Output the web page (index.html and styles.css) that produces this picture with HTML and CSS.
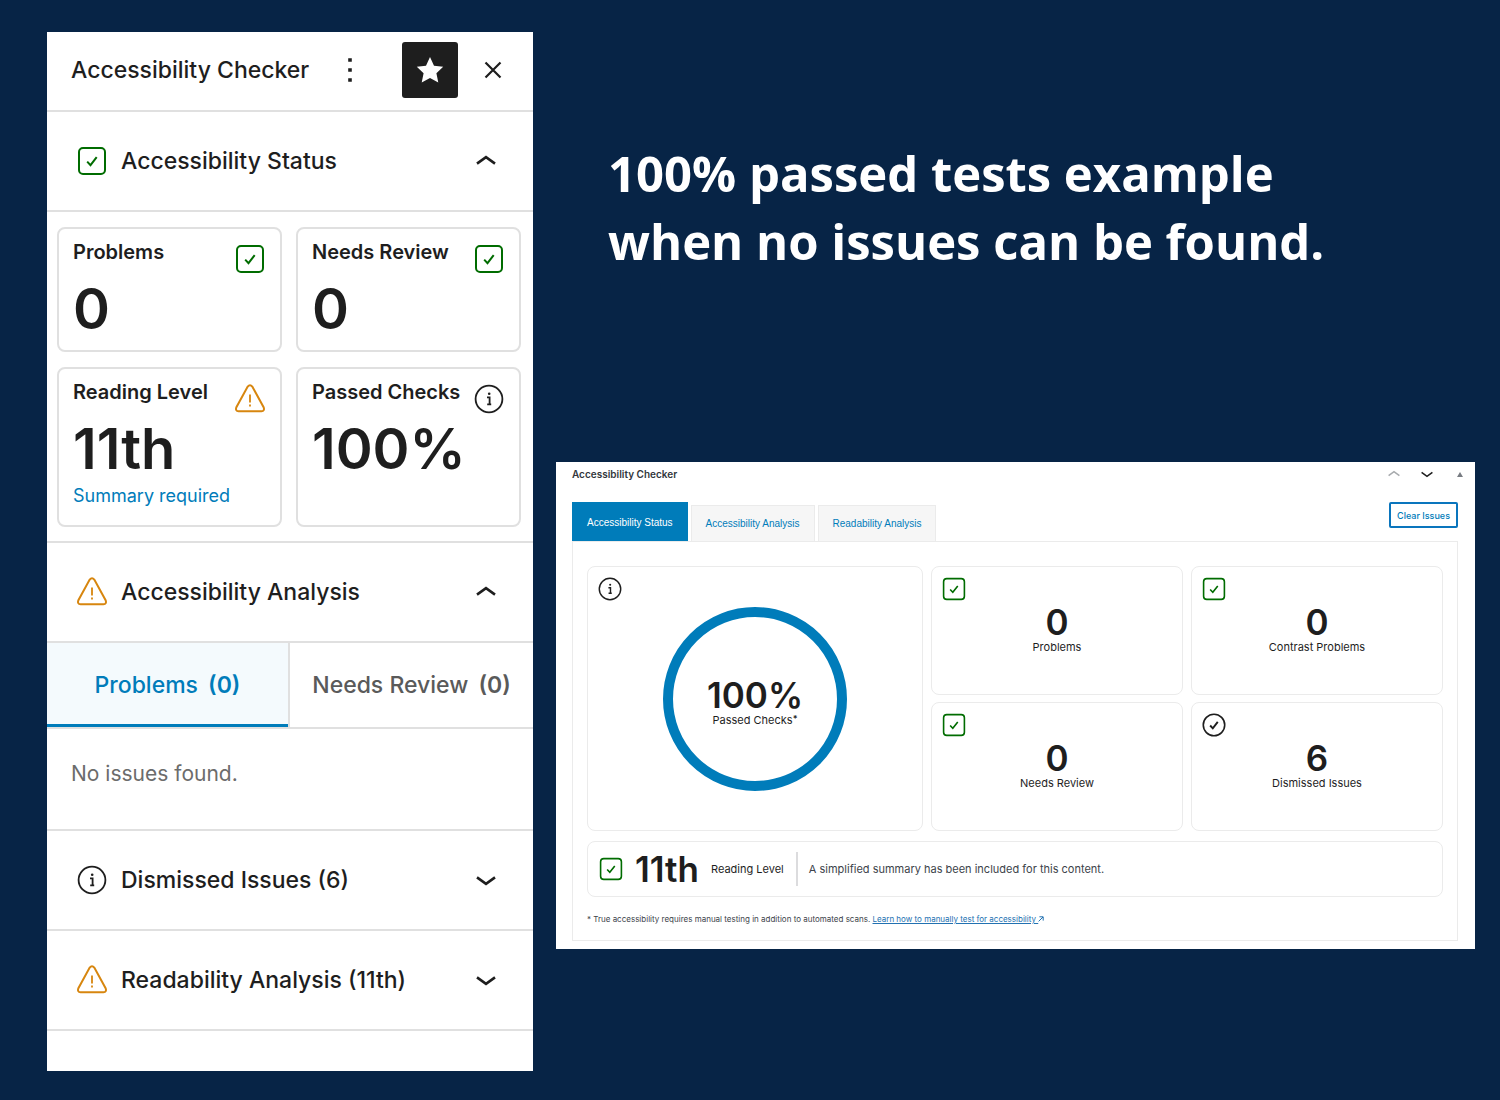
FILE: index.html
```html
<!DOCTYPE html>
<html lang="en">
<head>
<meta charset="utf-8">
<meta name="viewport" content="width=device-width, initial-scale=1">
<title>Accessibility Checker</title>
<link rel="stylesheet" href="styles.css">
</head>
<body>
<svg class="sprite" aria-hidden="true">
  <symbol id="check-square" viewBox="0 0 30 30">
    <rect x="2" y="2" width="26" height="26" rx="4" fill="none" stroke="currentColor" stroke-width="2"/>
    <path d="M10.2 15.6l3.3 3.6 6.2-8" fill="none" stroke="currentColor" stroke-width="2"/>
  </symbol>
  <symbol id="check-circle" viewBox="0 0 30 30">
    <circle cx="15" cy="15" r="13.4" fill="none" stroke="currentColor" stroke-width="2"/>
    <path d="M10.2 15.6l3.3 3.6 6.2-8" fill="none" stroke="currentColor" stroke-width="2.4"/>
  </symbol>
  <symbol id="info" viewBox="0 0 30 30">
    <circle cx="15" cy="15" r="13.4" fill="none" stroke="currentColor" stroke-width="1.8"/>
    <circle cx="15.2" cy="9.7" r="1.3" fill="currentColor"/>
    <path d="M13 13.4h2.6v6.6M13.2 20.3h4" fill="none" stroke="currentColor" stroke-width="1.8"/>
  </symbol>
  <symbol id="warning" viewBox="0 0 30 30">
    <path d="M12.7 2.6Q15-.2 17.3 2.6L28.6 23.2Q30 27 26.4 27.3H3.6Q0 27 1.4 23.2Z" fill="none" stroke="currentColor" stroke-width="2"/>
    <path d="M15 10.6v8M15 20.6v2" fill="none" stroke="currentColor" stroke-width="1.8"/>
  </symbol>
  <symbol id="chevron" viewBox="0 0 20 12">
    <path d="M1 3.4l9 6.4 9-6.4" fill="none" stroke="currentColor" stroke-width="2.6"/>
  </symbol>
</svg>

<main class="page">
  <aside class="sidebar">
    <header class="sidebar-header">
      <h2 class="sidebar-title">Accessibility Checker</h2>
      <div class="sidebar-actions">
        <button class="icon-button" type="button" aria-label="Options">
          <svg class="dots" viewBox="0 0 6 26"><path d="M1.2 1.2h3.6v3.6H1.2zM1.2 11.2h3.6v3.6H1.2zM1.2 21.2h3.6v3.6H1.2z" fill="currentColor"/></svg>
        </button>
        <button class="icon-button pinned" type="button" aria-label="Unpin from toolbar" aria-pressed="true">
          <svg class="star" viewBox="0 0 28 28"><path d="M14 1l4 8.8 9.2 1-6.8 6.4 1.9 9.4L14 21.9l-8.3 4.7 1.9-9.4L.8 10.8l9.2-1z" fill="currentColor"/></svg>
        </button>
        <button class="icon-button close" type="button" aria-label="Close">
          <svg class="cross" viewBox="0 0 18 18"><path d="M1.5 1.5l15 15m0-15l-15 15" fill="none" stroke="currentColor" stroke-width="2.2"/></svg>
        </button>
      </div>
    </header>

    <h3 class="section-heading">
      <button class="section-toggle" type="button" aria-expanded="true">
        <svg class="icon pass"><use href="#check-square"/></svg>
        <span>Accessibility Status</span>
        <svg class="chevron up"><use href="#chevron"/></svg>
      </button>
    </h3>
    <div class="stats">
      <section class="stat">
        <h4 class="stat-label">Problems</h4>
        <svg class="icon pass"><use href="#check-square"/></svg>
        <p class="stat-value">0</p>
      </section>
      <section class="stat">
        <h4 class="stat-label">Needs Review</h4>
        <svg class="icon pass"><use href="#check-square"/></svg>
        <p class="stat-value">0</p>
      </section>
      <section class="stat">
        <h4 class="stat-label">Reading Level</h4>
        <svg class="icon warn"><use href="#warning"/></svg>
        <p class="stat-value">11th</p>
        <a class="stat-link" href="#summary">Summary required</a>
      </section>
      <section class="stat">
        <h4 class="stat-label">Passed Checks</h4>
        <svg class="icon"><use href="#info"/></svg>
        <p class="stat-value">100%</p>
      </section>
    </div>

    <h3 class="section-heading">
      <button class="section-toggle" type="button" aria-expanded="true">
        <svg class="icon warn"><use href="#warning"/></svg>
        <span>Accessibility Analysis</span>
        <svg class="chevron up"><use href="#chevron"/></svg>
      </button>
    </h3>
    <div class="issue-tabs" role="tablist">
      <button class="issue-tab selected" type="button" role="tab" aria-selected="true">Problems <span class="count">(0)</span></button>
      <button class="issue-tab" type="button" role="tab" aria-selected="false">Needs Review <span class="count">(0)</span></button>
    </div>
    <p class="empty">No issues found.</p>

    <h3 class="section-heading">
      <button class="section-toggle" type="button" aria-expanded="false">
        <svg class="icon"><use href="#info"/></svg>
        <span>Dismissed Issues (6)</span>
        <svg class="chevron"><use href="#chevron"/></svg>
      </button>
    </h3>
    <h3 class="section-heading">
      <button class="section-toggle" type="button" aria-expanded="false">
        <svg class="icon warn"><use href="#warning"/></svg>
        <span>Readability Analysis (11th)</span>
        <svg class="chevron"><use href="#chevron"/></svg>
      </button>
    </h3>
  </aside>

  <div class="content">
    <h1 class="headline">100% passed tests example<br>when no issues can be found.</h1>

    <section class="metabox">
      <header class="metabox-header">
        <h2 class="metabox-title">Accessibility Checker</h2>
        <div class="metabox-actions">
          <button class="mini-button muted" type="button" aria-label="Move up"><svg class="mini-chevron up"><use href="#chevron"/></svg></button>
          <button class="mini-button" type="button" aria-label="Move down"><svg class="mini-chevron"><use href="#chevron"/></svg></button>
          <button class="mini-button collapse" type="button" aria-label="Toggle panel"><svg class="triangle" viewBox="0 0 6 5"><path d="M3 0l3 5H0z" fill="currentColor"/></svg></button>
        </div>
      </header>

      <div class="metabox-bar">
        <div class="tabs" role="tablist">
          <button class="tab selected" type="button" role="tab" aria-selected="true">Accessibility Status</button>
          <button class="tab" type="button" role="tab" aria-selected="false">Accessibility Analysis</button>
          <button class="tab" type="button" role="tab" aria-selected="false">Readability Analysis</button>
        </div>
        <button class="clear-button" type="button">Clear Issues</button>
      </div>

      <div class="tab-panel" role="tabpanel">
        <div class="tiles">
          <section class="tile tile-dial">
            <svg class="tile-icon"><use href="#info"/></svg>
            <div class="dial">
              <p class="tile-value">100%</p>
              <p class="tile-label">Passed Checks<sup class="mark">*</sup></p>
            </div>
          </section>
          <section class="tile">
            <svg class="tile-icon pass"><use href="#check-square"/></svg>
            <p class="tile-value">0</p>
            <p class="tile-label">Problems</p>
          </section>
          <section class="tile">
            <svg class="tile-icon pass"><use href="#check-square"/></svg>
            <p class="tile-value">0</p>
            <p class="tile-label">Contrast Problems</p>
          </section>
          <section class="tile">
            <svg class="tile-icon pass"><use href="#check-square"/></svg>
            <p class="tile-value">0</p>
            <p class="tile-label">Needs Review</p>
          </section>
          <section class="tile">
            <svg class="tile-icon"><use href="#check-circle"/></svg>
            <p class="tile-value">6</p>
            <p class="tile-label">Dismissed Issues</p>
          </section>
        </div>

        <section class="reading">
          <svg class="reading-icon pass"><use href="#check-square"/></svg>
          <p class="tile-value">11th</p>
          <p class="tile-label">Reading Level</p>
          <p class="reading-note">A simplified summary has been included for this content.</p>
        </section>

        <p class="footnote">* True accessibility requires manual testing in addition to automated scans. <a class="footnote-link" href="#manual-testing">Learn how to manually test for accessibility <svg class="external" viewBox="0 0 6 6"><path d="M.6 5.4l4.4-4.4M1.4 .8h3.8v3.8" fill="none" stroke="currentColor" stroke-width="1"/></svg></a></p>
      </div>
    </section>
  </div>
</main>
</body>
</html>
```

FILE: styles.css
```css
:root {
  --navy: #072446;
  --ink: #1e1e1e;
  --blue: #007cba;
  --green: #006c00;
  --amber: #d7860f;
  --line: #e0e0e0;
  --line-soft: #ebebeb;
}

*, *::before, *::after { box-sizing: border-box; }

body {
  margin: 0;
  min-height: 100vh;
  background: var(--navy);
  color: var(--ink);
  font-family: Inter, "Liberation Sans", sans-serif;
}

h1, h2, h3, h4, p { margin: 0; }

button {
  margin: 0;
  padding: 0;
  border: 0;
  background: none;
  color: inherit;
  font: inherit;
  cursor: pointer;
}

svg { display: block; flex: none; }

.sprite { position: absolute; width: 0; height: 0; }

.pass { color: var(--green); }
.warn { color: var(--amber); }

.page {
  display: grid;
  grid-template-columns: 486fr 919fr;
  gap: 23px;
  align-items: start;
  padding: 32px 25px 29px 47px;
}

/* Editor sidebar */

.sidebar {
  padding-bottom: 40px;
  background: #fff;
}

.sidebar-header {
  display: flex;
  align-items: center;
  justify-content: space-between;
  height: 80px;
  padding: 0 12px 2px 24px;
  border-bottom: 2px solid var(--line);
}

.sidebar-title {
  font-size: 23px;
  font-weight: 500;
  line-height: 32px;
}

.sidebar-actions { display: flex; align-items: center; }

.icon-button {
  display: grid;
  place-items: center;
  width: 56px;
  height: 56px;
  border-radius: 3px;
}

.icon-button.pinned {
  margin-left: 24px;
  background: var(--ink);
  color: #fff;
}

.icon-button.close { margin-left: 7px; }

.dots { width: 6px; height: 26px; }
.star { width: 28px; height: 28px; }
.cross { width: 18px; height: 18px; }

.section-heading {
  border-bottom: 2px solid var(--line);
  font-size: 23px;
  font-weight: 500;
  line-height: 32px;
}

.section-toggle {
  display: flex;
  align-items: center;
  gap: 14px;
  width: 100%;
  height: 98px;
  padding: 0 37px 0 30px;
  text-align: left;
}

.icon { width: 30px; height: 30px; }

.chevron { width: 20px; height: 12px; margin-left: auto; }
.up { transform: rotate(180deg); }

.stats {
  display: grid;
  grid-template-columns: 1fr 1fr;
  grid-template-rows: 125px 160px;
  gap: 15px 14px;
  padding: 15px 12px 14px 10px;
  border-bottom: 2px solid var(--line);
}

.stat {
  display: grid;
  grid-template-columns: 1fr auto;
  align-content: start;
  padding: 9px 15px 0 14px;
  border: 2px solid var(--line);
  border-radius: 8px;
}

.stat .icon { margin-top: 6px; }

.stat-label {
  font-size: 20px;
  font-weight: 600;
  line-height: 28px;
}

.stat-value {
  grid-column: 1 / -1;
  font-size: 56px;
  font-weight: 600;
  line-height: 70px;
}

.stat-link {
  grid-column: 1 / -1;
  color: var(--blue);
  font-size: 18px;
  line-height: 24px;
  text-decoration: none;
}

.issue-tabs {
  display: grid;
  grid-template-columns: 241fr 245fr;
  border-bottom: 2px solid var(--line);
}

.issue-tab {
  height: 84px;
  color: #5a5a5a;
  font-size: 23px;
  font-weight: 500;
  line-height: 32px;
}

.issue-tab + .issue-tab { border-left: 2px solid var(--line); }

.issue-tab.selected {
  background: #f4fafd;
  box-shadow: inset 0 -3px 0 var(--blue);
  color: var(--blue);
}

.count { margin-left: 4px; font-weight: 600; }

.empty {
  padding: 29px 24px 39px;
  border-bottom: 2px solid var(--line);
  color: #6c6c6c;
  font-size: 21px;
  line-height: 32px;
}

/* Headline and metabox */

.content { min-width: 0; }

.headline {
  padding: 107px 0 187px 52px;
  color: #fff;
  font-family: "Open Sans", "Noto Sans", sans-serif;
  font-size: 49px;
  font-weight: 700;
  line-height: 68px;
}

.metabox {
  padding: 0 17px 8px 16px;
  background: #fff;
}

.metabox-header {
  display: flex;
  align-items: center;
  justify-content: space-between;
  height: 24px;
  margin-right: -14px;
}

.metabox-title {
  color: #32373c;
  font-size: 10px;
  font-weight: 600;
}

.metabox-actions { display: flex; align-items: center; gap: 9px; }

.mini-button {
  display: grid;
  place-items: center;
  width: 24px;
  height: 24px;
}

.mini-button.muted { color: #a7aaad; }
.mini-button.collapse { color: #787c82; }
.mini-chevron { width: 12px; height: 8px; }
.triangle { width: 6px; height: 5px; }

.metabox-bar {
  display: flex;
  align-items: flex-start;
  justify-content: space-between;
  margin-top: 16px;
}

.tabs { display: flex; align-items: flex-end; gap: 3px; }

.tab {
  height: 36px;
  padding: 0 14px;
  border: 1px solid var(--line-soft);
  border-bottom: 0;
  background: #f6f6f6;
  color: var(--blue);
  font-family: "Liberation Sans", Arial, sans-serif;
  font-size: 10px;
}

.tab.selected {
  height: 39px;
  border-color: var(--blue);
  background: var(--blue);
  color: #fff;
}

.clear-button {
  height: 26px;
  padding: 0 6px;
  border: 2px solid #0a75bd;
  border-radius: 2px;
  color: var(--blue);
  font-size: 9px;
  font-weight: 500;
}

.tab-panel {
  padding: 24px 14px 14px;
  border: 1px solid var(--line-soft);
}

.tiles {
  display: grid;
  grid-template-columns: 336fr 252fr 252fr;
  grid-template-rows: 129px 129px;
  gap: 7px 8px;
}

.tile {
  position: relative;
  display: flex;
  flex-direction: column;
  align-items: center;
  justify-content: center;
  border: 1px solid var(--line-soft);
  border-radius: 8px;
}

.tile-dial { grid-row: 1 / 3; }

.tile-icon {
  position: absolute;
  top: 10px;
  left: 10px;
  width: 24px;
  height: 24px;
}

.dial {
  display: flex;
  flex-direction: column;
  align-items: center;
  justify-content: center;
  width: 184px;
  height: 184px;
  padding-top: 10px;
  border: 10px solid var(--blue);
  border-radius: 50%;
}

.tile-value {
  font-size: 35px;
  font-weight: 600;
  line-height: 32px;
}

.tile-label {
  font-size: 11px;
  line-height: 18px;
}

.mark {
  font-size: 9px;
  font-weight: 600;
  line-height: 0;
  vertical-align: 2px;
}

.reading {
  display: flex;
  align-items: center;
  gap: 12px;
  height: 56px;
  margin-top: 10px;
  padding: 0 11px;
  border: 1px solid var(--line-soft);
  border-radius: 8px;
}

.reading-icon { width: 24px; height: 24px; }

.reading-note {
  padding-left: 11px;
  border-left: 2px solid #dcdcde;
  color: #3c434a;
  font-size: 11px;
  line-height: 34px;
}

.footnote {
  margin-top: 15px;
  color: #3c434a;
  font-size: 8px;
  line-height: 14px;
}

.footnote-link { color: #2271b1; }

.external { display: inline-block; width: 6px; height: 6px; }
```
